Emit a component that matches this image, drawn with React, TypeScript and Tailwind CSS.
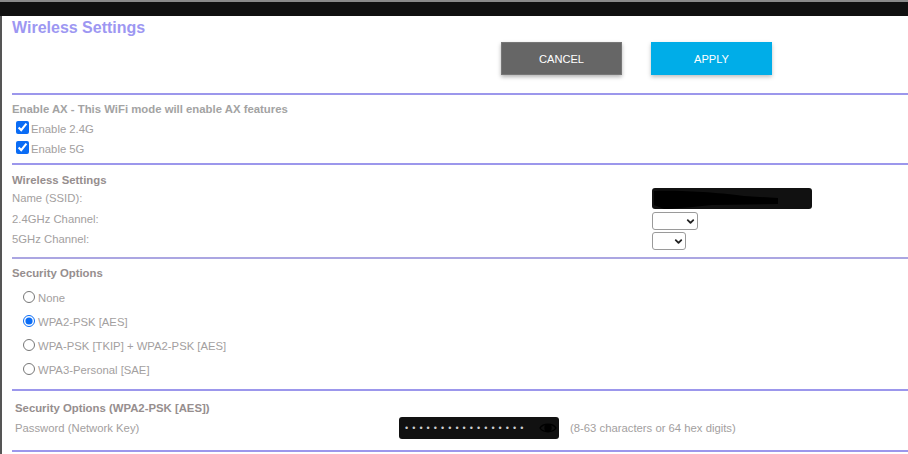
import React from 'react';
import { ChevronDown } from 'lucide-react';

const labelText = 'text-[11.3px] leading-[14px] text-[#a3a0a0]';
const heading = 'text-[11.35px] leading-[14px] font-bold text-[#968e8e]';

function Rule({ className = '' }: { className?: string }) {
  return <div className={`h-[2px] bg-[#9c97ec] shrink-0 ${className}`} />;
}

function Check({ label, className = '' }: { label: string; className?: string }) {
  return (
    <label className={`flex items-center h-[14px] pl-[4px] ${className}`}>
      <input type="checkbox" defaultChecked className="m-0 w-[13px] h-[13px] -mt-[3px] accent-[#0a6cf5]" />
      <span className={`ml-[2px] ${labelText}`}>{label}</span>
    </label>
  );
}

function Radio({ label, checked, className = '' }: { label: string; checked?: boolean; className?: string }) {
  return (
    <label className={`flex items-center h-[14px] pl-[11px] ${className}`}>
      <input type="radio" name="security" defaultChecked={checked} className="m-0 w-[12px] h-[12px] -mt-[2px] accent-[#0a6cf5]" />
      <span className={`ml-[3px] ${labelText}`}>{label}</span>
    </label>
  );
}

function ChannelSelect({ width, arrow, className = '' }: { width: string; arrow: string; className?: string }) {
  return (
    <div className={`h-[18px] border border-[#9a9a9a] rounded-[3px] bg-white flex items-center ${width} ${arrow} ${className}`}>
      <ChevronDown size={11} strokeWidth={4} className="text-[#222]" />
    </div>
  );
}

export default function App() {
  return (
    <div className="w-[908px] h-[454px] overflow-hidden bg-white flex flex-col font-['Liberation_Sans',Arial,sans-serif]">
      <div className="h-[2px] bg-[#8a8a8a] shrink-0" />
      <div className="h-[14px] bg-[#101010] shrink-0" />

      <div className="flex-1 border-l-2 border-[#555] pl-[10px] flex flex-col min-h-0">
        <h1 className="mt-[3px] text-[16px] leading-[18px] font-bold text-[#9d97f2]">Wireless Settings</h1>

        <div className="flex mt-[5px] ml-[489px] gap-[29px]">
          <button className="w-[121px] h-[33px] pt-[1px] bg-[#666] text-white text-[11.1px] shadow-[0_2px_4px_rgba(0,0,0,0.3)] border border-[#777]">CANCEL</button>
          <button className="w-[121px] h-[33px] pt-[1px] bg-[#00ade8] text-white text-[11.1px] shadow-[0_2px_4px_rgba(0,0,0,0.25)]">APPLY</button>
        </div>

        <Rule className="mt-[18px]" />

        <div className={`mt-[7px] ${heading} text-[#a3a3a3]`}>Enable AX - This WiFi mode will enable AX features</div>
        <Check label="Enable 2.4G" className="mt-[6px]" />
        <Check label="Enable 5G" className="mt-[6px]" />

        <Rule className="mt-[7px]" />

        <div className={`mt-[8px] ${heading}`}>Wireless Settings</div>
        <div className="flex mt-[2px]">
          <div className="w-[640px] flex flex-col">
            <div className={`mt-[2px] ${labelText}`}>Name (SSID):</div>
            <div className={`mt-[7px] ${labelText}`}>2.4GHz Channel:</div>
            <div className={`mt-[6px] ${labelText}`}>5GHz Channel:</div>
          </div>
          <div className="flex flex-col">
            <div className="w-[160px] h-[21px] -mt-[1px] rounded-[3px] bg-[#111] overflow-hidden">
              <svg width="160" height="21" viewBox="0 0 160 21">
                <path d="M2 3 C30 2 70 5 92 8 L126 10 L126 16 L60 17 C40 19 20 21 12 21 L2 17 Z" fill="#000" />
              </svg>
            </div>
            <ChannelSelect width="w-[46px]" arrow="pl-[32px]" className="mt-[3px]" />
            <ChannelSelect width="w-[34px]" arrow="pl-[20px]" className="mt-[2px]" />
          </div>
        </div>

        <Rule className="mt-[7px] bg-[#aba6e2]" />

        <div className={`mt-[7px] ${heading}`}>Security Options</div>
        <Radio label="None" className="mt-[11px]" />
        <Radio label="WPA2-PSK [AES]" checked className="mt-[10px]" />
        <Radio label="WPA-PSK [TKIP] + WPA2-PSK [AES]" className="mt-[10px]" />
        <Radio label="WPA3-Personal [SAE]" className="mt-[10px]" />

        <Rule className="mt-[12px]" />

        <div className="pl-[3px]">
          <div className={`mt-[10px] ${heading}`}>Security Options (WPA2-PSK [AES])</div>
          <div className="flex items-center mt-[2px]">
            <div className={`w-[384px] ${labelText}`}>Password (Network Key)</div>
            <div className="w-[160px] h-[22px] rounded-[3px] bg-[#111] flex items-center pl-[6px] pr-[2px]">
              <span className="flex-1 text-[9px] leading-none tracking-[4.05px] text-[#d0d0d0]">•••••••••••••••••</span>
              <svg width="18" height="12" viewBox="0 0 18 12" fill="none" stroke="#000" strokeWidth="1.4">
                <path d="M1 6 C4 1 14 1 17 6 C14 11 4 11 1 6 Z" />
                <circle cx="9" cy="6" r="3" fill="#000" />
              </svg>
            </div>
            <div className={`ml-[11px] ${labelText}`}>(8-63 characters or 64 hex digits)</div>
          </div>
        </div>

        <Rule className="mt-[11px]" />
      </div>
    </div>
  );
}
